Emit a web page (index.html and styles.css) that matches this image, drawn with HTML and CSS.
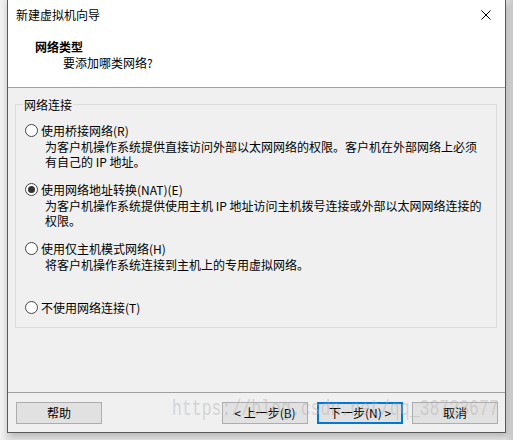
FILE: index.html
```html
<!DOCTYPE html>
<html lang="zh-CN">
<head>
  <meta charset="UTF-8">
  <title>新建虚拟机向导</title>
  <link rel="stylesheet" href="styles.css">
</head>
<body>
  <div class="window">
    <div class="header">
      <div class="titlebar">
        <span class="title">新建虚拟机向导</span>
        <svg class="close" width="10" height="10" viewBox="0 0 10 10">
          <path d="M0.5 0.5 L9.5 9.5 M9.5 0.5 L0.5 9.5" stroke="#000" stroke-width="1" fill="none"/>
        </svg>
      </div>
      <div class="heading">网络类型</div>
      <div class="subheading">要添加哪类网络?</div>
    </div>

    <div class="content">
      <div class="group">
        <span class="group-title">网络连接</span>

        <div class="option first">
          <div class="option-label"><span class="radio"></span>使用桥接网络(R)</div>
          <div class="option-desc">为客户机操作系统提供直接访问外部以太网网络的权限。客户机在外部网络上必须<br>有自己的 IP 地址。</div>
        </div>

        <div class="option">
          <div class="option-label"><span class="radio checked"></span>使用网络地址转换(NAT)(E)</div>
          <div class="option-desc">为客户机操作系统提供使用主机 IP 地址访问主机拨号连接或外部以太网网络连接的<br>权限。</div>
        </div>

        <div class="option">
          <div class="option-label"><span class="radio"></span>使用仅主机模式网络(H)</div>
          <div class="option-desc">将客户机操作系统连接到主机上的专用虚拟网络。</div>
        </div>

        <div class="option last">
          <div class="option-label"><span class="radio"></span>不使用网络连接(T)</div>
        </div>
      </div>
    </div>

    <div class="footer">
      <button class="btn">帮助</button>
      <span class="spacer"></span>
      <button class="btn">&lt; 上一步(B)</button>
      <button class="btn default">下一步(N) &gt;</button>
      <button class="btn">取消</button>
      <span class="watermark">https://blog.csdn.net/qq_38723677</span>
    </div>
  </div>
</body>
</html>
```

FILE: styles.css
```css
html, body {
  margin: 0;
  padding: 0;
}

body {
  width: 513px;
  height: 440px;
  overflow: hidden;
  background: linear-gradient(to right, #f2f2f2 0, #e4e4e4 7px, #e4e4e4 505px, #c9c9c9 513px);
  font-family: "Noto Sans CJK SC", "Noto Sans", sans-serif;
  font-size: 12px;
  color: #000;
}

.window {
  box-sizing: border-box;
  width: 499px;
  height: 433px;
  margin-left: 7px;
  border: 1px solid #595959;
  border-top: none;
  background: #f0f0f0;
  display: flex;
  flex-direction: column;
  box-shadow: 2px 4px 6px rgba(0, 0, 0, 0.18);
}

/* header */
.header {
  background: #fff;
  height: 87px;
  border-bottom: 1px solid #a0a0a0;
  box-sizing: content-box;
}

.titlebar {
  height: 30px;
  display: flex;
  align-items: center;
  padding-left: 8px;
  padding-right: 14px;
}

.title {
  flex: 1;
  line-height: 30px;
}

.close {
  display: block;
}

.heading {
  font-weight: bold;
  padding-left: 27px;
  line-height: 17px;
  margin-top: 8px;
}

.subheading {
  padding-left: 55px;
  line-height: 17px;
  margin-top: -1px;
}

/* content */
.content {
  flex: 1;
  padding: 16px 8px 0 7px;
  border-bottom: 1px solid #a0a0a0;
}

.group {
  border: 1px solid #dcdcdc;
  height: 222px;
  display: flex;
  flex-direction: column;
  padding-left: 9px;
}

.group-title {
  align-self: flex-start;
  margin: -9px 0 0 -2px;
  padding: 0 1px;
  line-height: 17px;
  background: #f0f0f0;
}

.option {
  margin-top: 12px;
}

.option.first {
  margin-top: 9px;
}

.option.last {
  margin-top: 27px;
}

.option-label {
  display: flex;
  align-items: center;
  line-height: 17px;
}

.option-desc {
  padding-left: 20px;
  line-height: 15px;
}

.radio {
  box-sizing: border-box;
  width: 13px;
  height: 13px;
  border: 1px solid #444;
  border-radius: 50%;
  background: #fff;
  margin-right: 3px;
  display: flex;
  align-items: center;
  justify-content: center;
}

.radio.checked::after {
  content: "";
  width: 7px;
  height: 7px;
  border-radius: 50%;
  background: #333;
}

/* footer */
.footer {
  position: relative;
  height: 39px;
  display: flex;
  align-items: flex-start;
  padding: 9px 7px 0 8px;
  gap: 9px;
  box-sizing: border-box;
}

.spacer {
  flex: 1;
}

.btn {
  box-sizing: border-box;
  width: 86px;
  height: 22px;
  border: 1px solid #adadad;
  background: #e1e1e1;
  font-family: inherit;
  font-size: 12px;
  color: #000;
  padding: 0;
  line-height: 18px;
}

.btn.default {
  border: 2px solid #0078d7;
}

.watermark {
  position: absolute;
  left: 164px;
  top: 4px;
  font-family: "Liberation Mono", monospace;
  font-size: 16.5px;
  color: rgba(175, 175, 175, 0.45);
  white-space: nowrap;
  pointer-events: none;
  transform: scaleY(1.3);
  transform-origin: left top;
}
```
